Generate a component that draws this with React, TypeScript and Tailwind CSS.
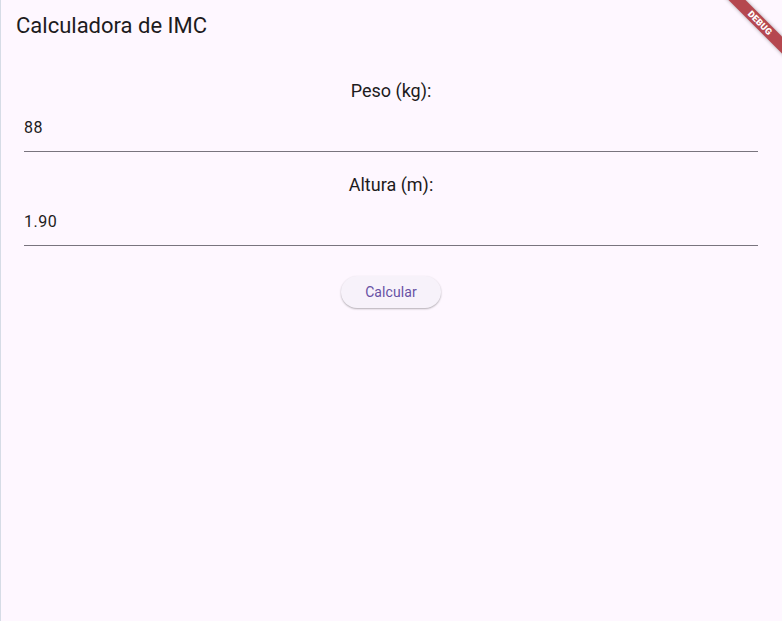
import React from 'react'

const font = { fontFamily: 'Roboto, "Noto Sans", sans-serif' }

function DebugBanner() {
  return (
    <div className="pointer-events-none absolute inset-0 overflow-hidden">
      <div className="absolute left-[704px] top-[17px] flex h-[12px] w-[110px] rotate-45 items-center justify-center bg-[#b5474f] shadow-[0_0_4px_rgba(0,0,0,0.35)]">
        <span className="text-[9px] font-black leading-none tracking-[0.2px] text-white">DEBUG</span>
      </div>
    </div>
  )
}

function Field({ label, value }: { label: string; value: string }) {
  return (
    <div className="flex w-full flex-col items-center">
      <div className="h-6 text-[18px] leading-6 text-[#1d1b20]">{label}</div>
      <div className="mt-[13px] w-full border-b border-[#79747e] pb-[11px]">
        <div className="h-6 text-[16px] leading-6 tracking-[0.5px] text-[#1d1b20]">{value}</div>
      </div>
    </div>
  )
}

export default function App() {
  return (
    <div className="relative h-[621px] w-full overflow-hidden border-l border-[#d6dce6] bg-[#fef7ff]" style={font}>
      <header className="flex h-14 items-center pl-[15px] pb-[4px]">
        <h1 className="text-[22px] leading-7 text-[#1d1b20]">Calculadora de IMC</h1>
      </header>
      <main className="flex flex-col items-center pl-[23px] pr-[24px]">
        <div className="mt-[23px] w-full">
          <Field label="Peso (kg):" value="88" />
        </div>
        <div className="mt-[21px] w-full">
          <Field label="Altura (m):" value="1.90" />
        </div>
        <button className="mt-[30px] h-8 rounded-full bg-[#f7f2fa] px-6 text-[14px] font-normal leading-5 tracking-[0.1px] text-[#6750a4] shadow-[0_1px_2px_rgba(0,0,0,0.3)]">
          Calcular
        </button>
      </main>
      <DebugBanner />
    </div>
  )
}
